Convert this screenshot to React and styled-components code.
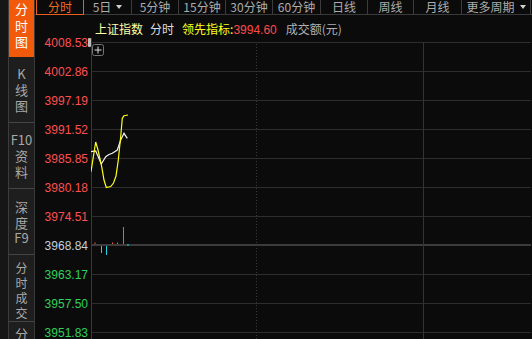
import React from 'react';
import styled, { createGlobalStyle } from 'styled-components';

const GlobalStyle = createGlobalStyle`
  html, body {
    margin: 0;
    padding: 0;
    background: #0b0b0b;
    overflow: hidden;
  }
  * {
    box-sizing: border-box;
  }
`;

const CJK = `"Noto Sans CJK SC", "Noto Sans", sans-serif`;
const NUM = `"Liberation Sans", Arial, sans-serif`;

const sideTabs = [
  { chars: ['分', '时', '图'], active: true, height: 57, pad: 1, lh: 16.5, fs: 13 },
  { chars: ['K', '线', '图'], height: 66, pad: 9, lh: 16, fs: 13 },
  { chars: ['F10', '资', '料'], height: 66, pad: 9, lh: 16, fs: 13 },
  { chars: ['深', '度', 'F9'], height: 66, pad: 10, lh: 15.5, fs: 13 },
  { chars: ['分', '时', '成', '交'], height: 67, pad: 5, lh: 15, fs: 12 },
  { chars: ['分'], height: 20, pad: 4, lh: 15, fs: 13 }
];

const periods = [
  { label: '分时', width: 48, active: true },
  { label: '5日', width: 48, menu: true },
  { label: '5分钟', width: 47 },
  { label: '15分钟', width: 47 },
  { label: '30分钟', width: 47 },
  { label: '60分钟', width: 48 },
  { label: '日线', width: 47 },
  { label: '周线', width: 46 },
  { label: '月线', width: 48 },
  { label: '更多周期', width: 69, menu: true }
];

const scale = [
  { v: '4008.53', tone: 'up' },
  { v: '4002.86', tone: 'up' },
  { v: '3997.19', tone: 'up' },
  { v: '3991.52', tone: 'up' },
  { v: '3985.85', tone: 'up' },
  { v: '3980.18', tone: 'up' },
  { v: '3974.51', tone: 'up' },
  { v: '3968.84', tone: 'flat' },
  { v: '3963.17', tone: 'down' },
  { v: '3957.50', tone: 'down' },
  { v: '3951.83', tone: 'down' }
];

const toneColor = {
  up: '#ff4f4f',
  flat: '#c6cede',
  down: '#2fd05a'
};

// price / average curves, in chart pixels
const pricePts = [
  [0, 133.7], [4.7, 104], [7, 112], [10.7, 128.7], [13, 142], [15.3, 149.5],
  [19.7, 148.5], [22.5, 145], [25, 138], [27.3, 122], [29.7, 98.7],
  [31.3, 80.3], [33, 77.7], [37, 77]
];

const avgPts = [
  [0, 113.7], [4.7, 113], [10.3, 126], [14.7, 118.7], [18, 116.5],
  [21.3, 115.3], [26.3, 112], [29.7, 102], [33, 95.3], [36.3, 100.3]
];

const gridY = [4.5, 33.5, 62.5, 91.5, 120.5, 149.5, 178.5, 236.5, 265.5, 294.5];

export default function App() {
  return (
    <Screen>
      <GlobalStyle />
      <Sidebar>
        <Rail />
        <SideTabs>
          {sideTabs.map((t, i) => (
            <SideTab
              key={i}
              $active={t.active}
              $h={t.height}
              $pad={t.pad}
              $lh={t.lh}
              $fs={t.fs}
            >
              {t.chars.map((c, j) => (
                <span key={j}>{c}</span>
              ))}
            </SideTab>
          ))}
        </SideTabs>
      </Sidebar>

      <Main>
        <PeriodBar>
          {periods.map(p => (
            <Period key={p.label} $active={p.active} $w={p.width}>
              {p.label}
              {p.menu && <Caret />}
            </Period>
          ))}
        </PeriodBar>

        <Body>
          <Axis>
            {scale.map((s, i) => (
              <Tick key={s.v} $tone={s.tone}>
                {s.v}
                {i === 0 && <Handle />}
              </Tick>
            ))}
          </Axis>

          <ChartPane>
            <Header>
              <Name>上证指数</Name>
              <Mode>分时</Mode>
              <Lead>
                领先指标:<LeadValue>3994.60</LeadValue>
              </Lead>
              <Volume>成交额(元)</Volume>
            </Header>

            <Chart width="440" height="301" viewBox="0 0 440 301">
              <line x1="0.5" y1="0" x2="0.5" y2="301" stroke="#3a3a3a" />
              {gridY.map(y => (
                <line key={y} x1="0" y1={y} x2="440" y2={y} stroke="#2d2d2d" />
              ))}
              <line x1="0" y1="207" x2="440" y2="207" stroke="#3b3b3b" strokeWidth="2" />
              <line x1="165.5" y1="6" x2="165.5" y2="301" stroke="#3a3a3a" strokeDasharray="1 2" />
              <line x1="332.5" y1="4" x2="332.5" y2="301" stroke="#333" />

              <rect x="1.5" y="6.5" width="11" height="11" rx="2" fill="none" stroke="#777" />
              <line x1="3.5" y1="12" x2="10.5" y2="12" stroke="#ddd" />
              <line x1="7" y1="8.5" x2="7" y2="15.5" stroke="#ddd" />

              <polyline
                points={avgPts.map(p => p.join(',')).join(' ')}
                fill="none"
                stroke="#f2f2f2"
                strokeWidth="1.2"
              />
              <polyline
                points={pricePts.map(p => p.join(',')).join(' ')}
                fill="none"
                stroke="#ffff1a"
                strokeWidth="1.2"
              />

              <line x1="32.5" y1="189" x2="32.5" y2="206" stroke="#ff4f4f" />
              <line x1="4" y1="204.5" x2="4" y2="206" stroke="#ff4f4f" />
              <line x1="21.5" y1="204.5" x2="21.5" y2="206" stroke="#ff4f4f" />
              <line x1="26.5" y1="204.5" x2="26.5" y2="206" stroke="#ff4f4f" />
              <line x1="10.5" y1="208" x2="10.5" y2="215" stroke="#22d3e6" />
              <line x1="15.5" y1="208" x2="15.5" y2="217" stroke="#22d3e6" />
              <line x1="37" y1="206" x2="37" y2="208" stroke="#22d3e6" />
            </Chart>
          </ChartPane>
        </Body>
      </Main>
    </Screen>
  );
}

const Screen = styled.div`
  display: flex;
  width: 532px;
  height: 339px;
  background: #0b0b0b;
  overflow: hidden;
`;

const Sidebar = styled.div`
  display: flex;
  width: 35px;
  flex-shrink: 0;
  border-right: 1px solid #3a3a3a;
`;

const Rail = styled.div`
  width: 9px;
  background: #161616;
  border-right: 1px solid #3c3c3c;
`;

const SideTabs = styled.div`
  flex: 1;
  display: flex;
  flex-direction: column;
  overflow: hidden;
`;

const SideTab = styled.div`
  display: flex;
  flex-direction: column;
  align-items: center;
  flex-shrink: 0;
  height: ${p => p.$h}px;
  padding-top: ${p => p.$pad}px;
  background: ${p => (p.$active ? '#f05a0a' : '#1e1e1e')};
  border-bottom: 1px solid ${p => (p.$active ? '#f05a0a' : '#444')};
  color: ${p => (p.$active ? '#ffffff' : '#a8a8a8')};
  font-family: ${CJK};
  font-size: ${p => p.$fs}px;
  line-height: ${p => p.$lh}px;

  span {
    display: block;
  }
`;

const Main = styled.div`
  flex: 1;
  display: flex;
  flex-direction: column;
  min-width: 0;
`;

const PeriodBar = styled.div`
  display: flex;
  height: 15px;
  padding-left: 1px;
  border-bottom: 1px solid #3a3a3a;
  flex-shrink: 0;
`;

const Period = styled.div`
  display: flex;
  align-items: center;
  justify-content: center;
  gap: 5px;
  width: ${p => p.$w}px;
  flex-shrink: 0;
  height: ${p => (p.$active ? '15px' : '14px')};
  border-right: 1px solid #3c3c3c;
  border: ${p => (p.$active ? '1px solid #e8601a' : undefined)};
  border-top: ${p => (p.$active ? 'none' : undefined)};
  color: ${p => (p.$active ? '#f06a20' : '#acacac')};
  font-family: ${CJK};
  font-size: 12px;
  line-height: 14px;
`;

const Caret = styled.span`
  width: 0;
  height: 0;
  border-left: 3.5px solid transparent;
  border-right: 3.5px solid transparent;
  border-top: 4px solid #d0d0d0;
`;

const Body = styled.div`
  flex: 1;
  display: flex;
`;

const Axis = styled.div`
  width: 56px;
  flex-shrink: 0;
  display: flex;
  flex-direction: column;
  padding-top: 13px;
`;

const Tick = styled.div`
  position: relative;
  height: 29px;
  flex-shrink: 0;
  display: flex;
  align-items: center;
  justify-content: flex-end;
  padding-right: 3px;
  color: ${p => toneColor[p.$tone]};
  font-family: ${NUM};
  font-size: 12px;
`;

const Handle = styled.span`
  position: absolute;
  right: 0;
  top: 10px;
  width: 3px;
  height: 9px;
  border-radius: 1px;
  background: #bdbdbd;
`;

const ChartPane = styled.div`
  flex: 1;
  display: flex;
  flex-direction: column;
`;

const Header = styled.div`
  display: flex;
  align-items: center;
  height: 23px;
  padding: 3px 0 0 4px;
  font-family: ${CJK};
  font-size: 12px;
  white-space: nowrap;
`;

const Name = styled.span`
  color: #ffffa6;
`;

const Mode = styled.span`
  color: #dedede;
  margin-left: 7px;
`;

const Lead = styled.span`
  color: #ffff1a;
  margin-left: 8px;
`;

const LeadValue = styled.span`
  color: #ff4a4a;
  font-family: ${NUM};
`;

const Volume = styled.span`
  color: #b0b0b0;
  margin-left: 9px;
`;

const Chart = styled.svg`
  display: block;
  flex-shrink: 0;
`;
